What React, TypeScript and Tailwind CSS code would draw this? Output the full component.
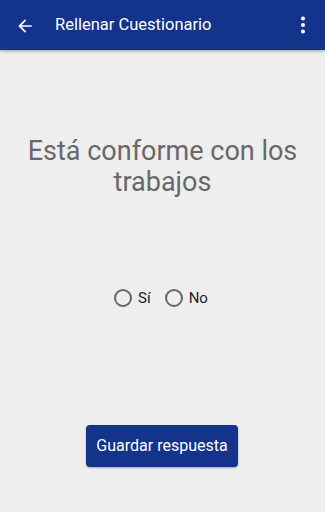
export default function App() {
  return (
    <div className="w-[325px] h-[512px] bg-[#eeeeee] flex flex-col font-['Roboto',sans-serif]">
      <header className="h-[50px] bg-[#13348a] flex items-center shadow-[0_1px_3px_rgba(0,0,0,0.35)] relative z-10">
        <button className="w-[52px] h-full flex items-center justify-center pr-[2px] pt-[1px]">
          <svg width="20" height="20" viewBox="0 0 24 24" fill="white">
            <path d="M20 11H7.83l5.59-5.59L12 4l-8 8 8 8 1.41-1.41L7.83 13H20v-2z" />
          </svg>
        </button>
        <h1 className="text-white text-[16.5px] ml-[3px] flex-1 pt-[1px]">Rellenar Cuestionario</h1>
        <button className="w-[44px] h-full flex items-center justify-center">
          <svg width="24" height="24" viewBox="0 0 24 24" fill="white">
            <circle cx="12" cy="5.5" r="2" />
            <circle cx="12" cy="12" r="2" />
            <circle cx="12" cy="18.5" r="2" />
          </svg>
        </button>
      </header>

      <main className="flex-1 flex flex-col items-center">
        <p className="mt-[86px] px-3 text-center text-[27px] leading-[31px] text-[#686868]">
          Está conforme con los trabajos
        </p>

        <div className="mt-[89px] flex items-center gap-[14px] text-[15px] text-[#222] pr-[3px]">
          <label className="flex items-center gap-[6px]">
            <span className="w-[18px] h-[18px] rounded-full border-2 border-[#666]" />
            Sí
          </label>
          <label className="flex items-center gap-[6px]">
            <span className="w-[18px] h-[18px] rounded-full border-2 border-[#666]" />
            No
          </label>
        </div>

        <button className="mt-[115px] w-[152px] h-[42px] rounded-[4px] bg-[#13348a] text-white text-[16px] shadow-[0_1px_2px_rgba(0,0,0,0.3)] mr-[1px]">
          Guardar respuesta
        </button>
      </main>
    </div>
  );
}
